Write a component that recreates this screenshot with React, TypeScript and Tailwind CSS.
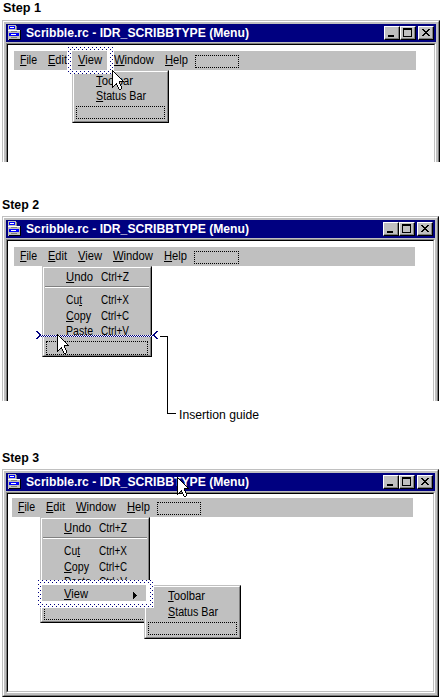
import { useLayoutEffect, useRef, type ReactNode } from "react";

/** Text condensed or widened horizontally to a fixed pixel width. */
function Fit({ w, text, accel, className = "" }: { w: number; text: string; accel?: number; className?: string }) {
  const ref = useRef<HTMLSpanElement>(null);
  useLayoutEffect(() => {
    const el = ref.current;
    if (!el) return;
    el.style.transform = "none";
    const natural = el.getBoundingClientRect().width;
    el.style.transform = `scaleX(${w / natural})`;
  }, [w, text]);
  return (
    <span ref={ref} className={`inline-block origin-left whitespace-pre ${className}`}>
      {accel === undefined ? (
        text
      ) : (
        <>
          {text.slice(0, accel)}
          <span className="underline decoration-1 underline-offset-1">{text[accel]}</span>
          {text.slice(accel + 1)}
        </>
      )}
    </span>
  );
}

function MenuIcon() {
  return (
    <svg width="14" height="16" viewBox="0 0 14 16" shapeRendering="crispEdges" className="shrink-0">
      <path fill="#c0c0c0" d="M0 0h8v5H0zM0 5h12v10H0z" />
      <path fill="#fff" d="M0 5h12v1H0z" />
      <path fill="#00f" d="M1 1h6v3H1zM1 8h10v3H1z" />
      <path fill="#fff" d="M2 2h4v1H2zM3 9h5v1H3z" />
      <path fill="#808080" d="M3 6h6v1H3zM3 12h6v1H3zM8 1h1v4H8z" />
      <path fill="#000" d="M12 5h1v10h-1zM1 14h12v1H1z" />
    </svg>
  );
}

function CaptionButton({ children, wide = false }: { children: ReactNode; wide?: boolean }) {
  return (
    <div
      className={`h-[14px] w-4 border border-t-white border-l-white border-r-black border-b-black bg-[#c0c0c0] ${wide ? "ml-0.5" : ""}`}
    >
      <div className="h-full w-full border-r border-b border-[#808080]">
        <svg width="13" height="11" viewBox="0 0 13 11" shapeRendering="crispEdges" className="block">
          {children}
        </svg>
      </div>
    </div>
  );
}

function Win({ size, children }: { size: string; children: ReactNode }) {
  return (
    <div className={`${size} ml-[2px] shrink-0 border border-t-[#c0c0c0] border-l-[#c0c0c0] border-r-black border-b-black`}>
      <div className="flex h-full flex-col border border-t-white border-l-white border-r-[#808080] border-b-[#808080] bg-[#c0c0c0] p-0.5">
        <div className="flex h-[18px] shrink-0 bg-[#000080] pr-0.5 pl-[2px]">
          <div className="pt-px">
            <MenuIcon />
          </div>
          <Fit
            w={223}
            text="Scribble.rc - IDR_SCRIBBTYPE (Menu)"
            className="ml-[4px] text-[12.5px] leading-[18px] font-bold text-white"
          />
          <div className="ml-auto flex pt-0.5">
            <CaptionButton>
              <path d="M3 8h6v2H3z" />
            </CaptionButton>
            <CaptionButton>
              <path fillRule="evenodd" d="M2 1h9v9H2zM3 3v6h7V3z" />
            </CaptionButton>
            <CaptionButton wide>
              <path d="M3 2h2v1H3zM9 2h2v1H9zM4 3h2v1H4zM8 3h2v1H8zM5 4h4v1H5zM6 5h2v1H6zM5 6h4v1H5zM4 7h2v1H4zM8 7h2v1H8zM3 8h2v1H3zM9 8h2v1H9z" />
            </CaptionButton>
          </div>
        </div>
        <div className="mt-px flex-1 border border-t-[#808080] border-l-[#808080] border-r-white border-b-white">
          <div className="h-full border border-t-black border-l-black border-r-[#c0c0c0] border-b-[#c0c0c0] bg-white">
            <div className="relative">{children}</div>
          </div>
        </div>
      </div>
    </div>
  );
}

function Popup({ place, children }: { place: string; children: ReactNode }) {
  return (
    <div className={`absolute ${place} border border-t-[#c0c0c0] border-l-[#c0c0c0] border-r-black border-b-black`}>
      <div className="h-full border border-t-white border-l-white border-r-[#808080] border-b-[#808080] bg-[#c0c0c0]">
        {children}
      </div>
    </div>
  );
}

function Dotted({ className }: { className: string }) {
  return <div className={`border border-dotted border-black ${className}`} />;
}

function Row({ w, text, accel, keys, className }: { w: number; text: string; accel: number; keys: string; className: string }) {
  return (
    <div className={`flex pl-[22px] ${className}`}>
      <div className="w-[35px]">
        <Fit w={w} text={text} accel={accel} />
      </div>
      <Fit w={28} text={keys} />
    </div>
  );
}

function EditRows() {
  return (
    <>
      <Row w={27} text="Undo" accel={0} keys="Ctrl+Z" className="mt-px h-4" />
      <div className="mx-px mt-px h-0.5 border-t border-b border-t-[#808080] border-b-white" />
      <Row w={16} text="Cut" accel={2} keys="Ctrl+X" className="mt-1 h-4" />
      <Row w={25} text="Copy" accel={0} keys="Ctrl+C" className="h-4" />
      <Row w={27} text="Paste" accel={0} keys="Ctrl+V" className="-mt-px h-4" />
    </>
  );
}

function ViewRows({ second }: { second: string }) {
  return (
    <div className="pt-px pl-[22px]">
      <div className="h-4">
        <Fit w={37} text="Toolbar" accel={0} />
      </div>
      <div className={second}>
        <Fit w={50} text="Status Bar" accel={0} />
      </div>
    </div>
  );
}

function DragFrame({ id, place, w, h, children }: { id: string; place: string; w: number; h: number; children: ReactNode }) {
  return (
    <div className={`absolute ${place} bg-white`}>
      <svg width={w} height={h} shapeRendering="crispEdges" className="absolute inset-0">
        <pattern id={id} width="4" height="4" patternUnits="userSpaceOnUse">
          <path fill="#000080" d="M1 0h1v1H1zM3 2h1v1H3z" />
        </pattern>
        <path fill={`url(#${id})`} fillRule="evenodd" d={`M0 0H${w}V${h}H0zM4 4V${h - 4}H${w - 4}V4z`} />
      </svg>
      {children}
    </div>
  );
}

const POINTER_ROWS = [
  "X",
  "XX",
  "X.X",
  "X..X",
  "X...X",
  "X....X",
  "X.....X",
  "X......X",
  "X.......X",
  "X........X",
  "X.........X",
  "X......XXXXX",
  "X......X",
  "X...X..X",
  "X..XX...X",
  "X.X  X..X",
  "XX   X...X",
  "X     X..X",
  "      X..X",
  "       XX",
];

function Pointer({ place }: { place: string }) {
  return (
    <svg width="12" height="20" viewBox="0 0 12 20" shapeRendering="crispEdges" className={`absolute ${place}`}>
      {POINTER_ROWS.flatMap((row, y) =>
        [...row].map((cell, x) =>
          cell === " " ? null : (
            <rect key={`${x}-${y}`} x={x} y={y} width="1" height="1" fill={cell === "X" ? "#000" : "#fff"} />
          ),
        ),
      )}
    </svg>
  );
}

function MenuBar({ className, children }: { className: string; children: ReactNode }) {
  return <div className={`flex h-[19px] bg-[#c0c0c0] pl-1.5 leading-[18px] ${className}`}>{children}</div>;
}

function Item({ size, w, text }: { size: string; w: number; text: string }) {
  return (
    <div className={size}>
      <Fit w={w} text={text} accel={0} />
    </div>
  );
}

function Step({ text, w, className }: { text: string; w: number; className: string }) {
  return (
    <div className={className}>
      <Fit w={w} text={text} className="font-bold" />
    </div>
  );
}

export default function App() {
  return (
    <div className="relative flex h-[697px] w-[441px] flex-col overflow-hidden bg-white font-['Liberation_Sans',Arial,sans-serif] text-[12px] leading-4 text-black">
      <Step text="Step 1" w={38} className="h-5 shrink-0 pl-[3px]" />

      <div className="h-[142px] shrink-0 overflow-hidden">
        <Win size="h-[170px] w-[438px]">
          <div className="pt-1.5">
            <MenuBar className="ml-1.5 w-[402px]">
              <Item size="w-[28px]" w={17} text="File" />
              <Item size="w-[66px]" w={19} text="Edit" />
              <Item size="w-[51px]" w={40} text="Window" />
              <Item size="w-[30px]" w={23} text="Help" />
              <Dotted className="mt-1 h-[13px] w-[44px]" />
            </MenuBar>
          </div>
          <Popup place="top-[25px] left-[64px] h-[53px] w-[97px]">
            <ViewRows second="-mt-px h-4" />
            <Dotted className="mt-[2px] ml-0.5 h-[13px] w-[89px]" />
          </Popup>
          <DragFrame id="dots1" place="top-[2px] left-[59px] h-[27px] w-[47px]" w={47} h={27}>
            <div className="relative mt-1 ml-[5px] h-[19px] w-[35px] bg-[#c0c0c0] pl-1.5 leading-[18px]">
              <Fit w={24} text="View" accel={0} />
            </div>
          </DragFrame>
          <Pointer place="top-[25px] left-[104px]" />
        </Win>
      </div>

      <Step text="Step 2" w={37} className="h-[54px] shrink-0 pt-[35px] pl-[2px]" />

      <div className="h-[185px] shrink-0 overflow-hidden">
        <Win size="h-[210px] w-[437px]">
          <div className="pt-1.5">
            <MenuBar className="ml-1.5 w-[401px]">
              <Item size="w-[28px]" w={17} text="File" />
              <Item size="w-[30px]" w={19} text="Edit" />
              <Item size="w-[35px]" w={24} text="View" />
              <Item size="w-[51px]" w={40} text="Window" />
              <Item size="w-[30px]" w={23} text="Help" />
              <Dotted className="mt-1 h-[13px] w-[45px]" />
            </MenuBar>
          </div>
          <Popup place="top-[25px] left-[34px] h-[91px] w-[110px]">
            <EditRows />
            <Dotted className="mt-0.5 ml-0.5 h-[14px] w-[102px]" />
          </Popup>
          <svg width="123" height="9" shapeRendering="crispEdges" className="absolute top-[90px] left-[28px]">
            <pattern id="guide" width="2" height="2" patternUnits="userSpaceOnUse">
              <path fill="#fff" d="M0 0h2v2H0z" />
              <path fill="#000080" d="M0 0h1v1H0zM1 1h1v1H1z" />
            </pattern>
            <path fill="url(#guide)" d="M5 4h112v2H5z" />
            <path
              fill="#000080"
              d="M0 0h2v1H0zM1 1h2v1H1zM2 2h2v1H2zM3 3h2v2H3zM2 5h2v1H2zM1 6h2v1H1zM0 7h2v1H0zM120 0h2v1h-2zM119 1h2v1h-2zM118 2h2v1h-2zM117 3h2v2h-2zM118 5h2v1h-2zM119 6h2v1h-2zM120 7h2v1h-2z"
            />
          </svg>
          <Pointer place="top-[93px] left-[49px]" />
        </Win>
      </div>

      <div className="flex h-[68px] shrink-0 flex-col pl-[2px]">
        <div className="h-[49px] pt-1.5 pl-[177px]">
          <Fit w={80} text="Insertion guide" />
        </div>
        <Step text="Step 3" w={37} className="" />
      </div>

      <Win size="h-[228px] w-[437px]">
        <div className="pt-1">
          <MenuBar className="ml-1 w-[401px]">
            <Item size="w-[28px]" w={17} text="File" />
            <Item size="w-[30px]" w={19} text="Edit" />
            <Item size="w-[51px]" w={40} text="Window" />
            <Item size="w-[30px]" w={23} text="Help" />
            <Dotted className="mt-1 h-[13px] w-[44px]" />
          </MenuBar>
        </div>
        <Popup place="top-[23px] left-[32px] h-[106px] w-[110px]">
          <EditRows />
          <Dotted className="mt-4 ml-0.5 h-[14px] w-[103px]" />
        </Popup>
        <Popup place="top-[91px] left-[136px] h-[54px] w-[97px]">
          <ViewRows second="h-4" />
          <Dotted className="mt-[2px] ml-0.5 h-[13px] w-[89px]" />
        </Popup>
        <DragFrame id="dots3" place="top-[86px] left-[29px] h-[28px] w-[117px]" w={117} h={28}>
          <div className="relative mt-[5px] ml-[5px] flex h-4 w-[104px] bg-[#c0c0c0] pl-[22px]">
            <div className="w-[69px] pt-px">
              <Fit w={24} text="View" accel={0} />
            </div>
            <svg width="4" height="7" viewBox="0 0 4 7" shapeRendering="crispEdges" className="mt-[7px]">
              <path d="M0 0h1v1h1v1h1v1h1v1H3v1H2v1H1v1H0z" />
            </svg>
          </div>
        </DragFrame>
        <Pointer place="-top-[17px] left-[169px]" />
      </Win>

      <svg width="17" height="78" shapeRendering="crispEdges" className="absolute top-[336px] left-[160px]">
        <path d="M0 0h8v77h8v1H7V1H0z" />
      </svg>
    </div>
  );
}
